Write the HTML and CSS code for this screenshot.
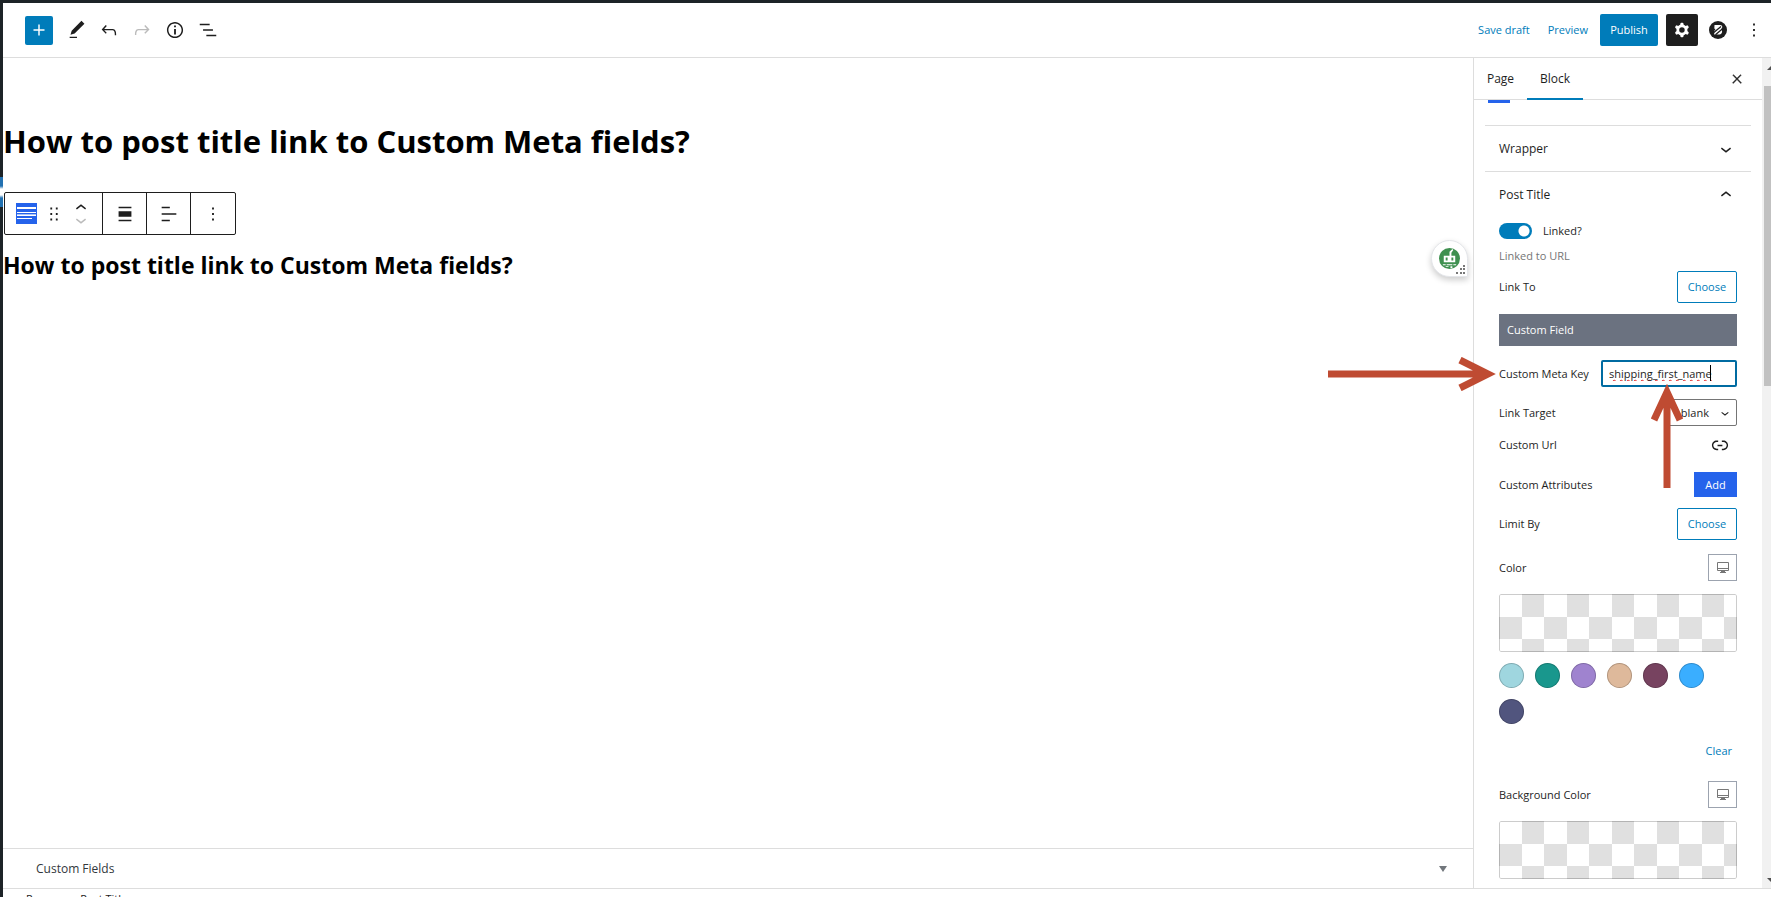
FILE: index.html
```html
<!DOCTYPE html>
<html lang="en">
<head>
<meta charset="utf-8">
<title>Edit Page</title>
<link rel="stylesheet" href="styles.css">
</head>
<body>
<svg class="sprite" aria-hidden="true">
  <symbol id="down" viewBox="0 0 24 24"><path d="M17.5 11.6L12 16l-5.5-4.4.9-1.2L12 14l4.5-3.6 1 1.2z"/></symbol>
  <symbol id="up" viewBox="0 0 24 24"><path d="M6.5 12.4L12 8l5.5 4.4-.9 1.2L12 10l-4.5 3.6-1-1.2z"/></symbol>
  <symbol id="more" viewBox="0 0 24 24"><path d="M13 19h-2v-2h2v2zm0-6h-2v-2h2v2zm0-6h-2V5h2v2z"/></symbol>
  <symbol id="monitor" viewBox="0 0 16 16"><path fill="none" stroke="#777" d="M2.5 2.5h11v8h-11zM2.500 8.500h11M6 11.500h4M5 12.500h6"/></symbol>
</svg>
<div class="app">
  <header class="topbar">
    <div class="tools">
      <button class="inserter" aria-label="Add block"><svg class="icon" viewBox="0 0 24 24"><path d="M18 11.200h-5.200V6h-1.600v5.200H6v1.600h5.200V18h1.600v-5.200H18z"/></svg></button>
      <button class="tool" aria-label="Tools"><svg class="icon" viewBox="0 0 24 24"><path d="M20.1 5.1L16.9 2 6.2 12.7l-1.3 4.4 4.5-1.3L20.1 5.1zM4 20.8h8v-1.5H4v1.5z"/></svg></button>
      <button class="tool" aria-label="Undo"><svg class="icon" viewBox="0 0 24 24"><path d="M18.3 11.7c-.6-.6-1.4-.9-2.3-.9H6.7l2.9-3.3-1.1-1-4.5 5L8.5 16l1-1-2.7-2.7H16c.5 0 .9.2 1.3.5 1 1 1 3.4 1 4.5v.3h1.5v-.2c0-1.5 0-4.3-1.5-5.7z"/></svg></button>
      <button class="tool muted" aria-label="Redo"><svg class="icon" viewBox="0 0 24 24"><path d="M15.6 6.5l-1.1 1 2.9 3.3H8c-.9 0-1.7.3-2.3.9-1.4 1.5-1.4 4.2-1.4 5.6v.2h1.5v-.3c0-1.1 0-3.5 1-4.5.3-.3.7-.5 1.300-.5h9.200L14.500 15l1.100 1.100 4.600-4.600-4.600-5z"/></svg></button>
      <button class="tool" aria-label="Details"><svg class="icon" viewBox="0 0 24 24"><path d="M12 3.2c-4.800 0-8.800 3.900-8.800 8.800 0 4.800 3.900 8.800 8.800 8.800 4.800 0 8.800-3.900 8.800-8.800 0-4.800-4-8.800-8.800-8.800zm0 16c-4 0-7.200-3.300-7.200-7.200C4.800 8 8 4.800 12 4.800s7.200 3.300 7.200 7.200c0 4-3.200 7.200-7.200 7.200zM11 17h2v-6h-2v6zm0-8h2V7h-2v2z"/></svg></button>
      <button class="tool" aria-label="List view"><svg class="icon" viewBox="0 0 24 24"><path d="M13.800 5.200H3v1.500h10.800V5.200zm-3.600 12v1.500H21v-1.500H10.200zm7.200-6H6.600v1.500h10.800v-1.500z"/></svg></button>
    </div>
    <div class="actions">
      <button class="text-button">Save draft</button>
      <button class="text-button preview">Preview</button>
      <button class="publish">Publish</button>
      <button class="settings" aria-label="Settings"><svg class="icon" viewBox="0 0 24 24"><path fill-rule="evenodd" d="M10.289 4.836A1 1 0 0111.275 4h1.306a1 1 0 01.987.836l.244 1.466c.787.26 1.503.679 2.108 1.218l1.393-.522a1 1 0 011.216.437l.653 1.130a1 1 0 01-.23 1.273l-1.148.944a6.025 6.025 0 010 2.435l1.149.946a1 1 0 01.23 1.272l-.653 1.130a1 1 0 01-1.216.437l-1.394-.522c-.605.54-1.320.958-2.108 1.218l-.244 1.466a1 1 0 01-.987.836h-1.306a1 1 0 01-.986-.836l-.244-1.466a5.995 5.995 0 01-2.108-1.218l-1.394.522a1 1 0 01-1.217-.436l-.653-1.131a1 1 0 01.23-1.272l1.149-.946a6.026 6.026 0 010-2.435l-1.148-.944a1 1 0 01-.23-1.272l.653-1.131a1 1 0 011.217-.437l1.393.522a5.994 5.994 0 012.108-1.218l.244-1.466zM14.929 12a3 3 0 11-6 0 3 3 0 016 0z"/></svg></button>
      <button class="plugin" aria-label="Plugin"><svg viewBox="0 0 18 18"><circle cx="9" cy="9" r="9"/><path fill="#fff" d="M5.500 4H11c2 0 2.800 1.500 2 3-.4.800-.8 1-.8 1.500 1.500 1 1.300 4.500-1.700 5H5.200V9.500h1V7.800h-.9z"/><path fill="none" stroke="#1e1e1e" stroke-width="1.300" d="M4.500 11.800 12 5.500M6.500 13.800 13.800 7.500"/></svg></button>
      <button class="options" aria-label="Options"><svg class="icon"><use href="#more"/></svg></button>
    </div>
  </header>

  <div class="workspace">
    <main class="editor">
      <div class="canvas">
        <h1 class="page-title">How to post title link to Custom Meta fields?</h1>
        <div class="block-toolbar">
          <div class="group first">
            <button class="block-type" aria-label="Post Title"><svg viewBox="0 0 21 21"><path fill="#2563eb" d="M0 0h21v21H0z"/><path fill="#fff" d="M1 4h19v2H1zM1 9h19v1H1zM1 12h19v1H1zM1 15h15v1H1z"/><path fill="#a8c1f7" d="M1 11h19v1H1z"/></svg></button>
            <button class="drag" aria-label="Drag"><svg class="icon" viewBox="0 0 24 24"><path d="M8 7h2V5H8v2zm0 6h2v-2H8v2zm0 6h2v-2H8v2zm6-14v2h2V5h-2zm0 8h2v-2h-2v2zm0 6h2v-2h-2v2z"/></svg></button>
            <div class="movers">
              <button aria-label="Move up"><svg class="icon"><use href="#up"/></svg></button>
              <button class="muted" aria-label="Move down"><svg class="icon"><use href="#down"/></svg></button>
            </div>
          </div>
          <button class="group" aria-label="Align"><svg class="icon" viewBox="0 0 24 24"><path d="M5 15h14V9H5v6zm0 4.800h14v-1.500H5v1.500zM5 4.200v1.500h14V4.200H5z"/></svg></button>
          <button class="group" aria-label="Align text"><svg class="icon" viewBox="0 0 24 24"><path d="M4 19.800h8.900v-1.500H4v1.500zm8.900-15.600H4v1.500h8.900V4.200zm-8.900 7v1.500h16v-1.500H4z"/></svg></button>
          <button class="group" aria-label="Options"><svg class="icon"><use href="#more"/></svg></button>
        </div>
        <h2 class="post-title">How to post title link to Custom Meta fields?</h2>
        <div class="assistant">
          <svg viewBox="0 0 22 22"><circle cx="11" cy="11" r="11" fill="#3f9050"/><path fill="#fff" d="M5 8h6V4l3-3 1 1-2 3v3h4v7H5zM4 17h3v1H4zM8 17h6v1H8zM15 17h3v1h-3zM7 19h3v1H7zM12 19h2v2h-2z"/><path fill="#3f9050" d="M7 10h2v3H7zM13 10h2v3h-2z"/></svg>
          <svg class="grip" viewBox="0 0 10 10"><path fill="#777" d="M7 0h2v2H7zM4 3h2v2H4zM7 3h2v2H7zM0 7h2v2H0zM4 7h2v2H4zM7 7h2v2H7z"/></svg>
        </div>
      </div>
      <button class="metabox"><span>Custom Fields</span><span class="triangle"></span></button>
    </main>

    <aside class="sidebar">
      <div class="tabs">
        <button class="tab page">Page</button>
        <button class="tab active">Block</button>
        <button class="close" aria-label="Close settings"><svg viewBox="0 0 24 24"><path d="M13 11.800l6.100-6.300-1-1-6.100 6.200-6.100-6.200-1 1 6.100 6.300-6.500 6.700 1 1 6.500-6.600 6.500 6.600 1-1z"/></svg></button>
      </div>
      <div class="panels">
        <div class="progress"></div>
        <button class="panel-head"><span>Wrapper</span><svg class="icon"><use href="#down"/></svg></button>
        <section class="panel">
          <button class="panel-head"><span>Post Title</span><svg class="icon"><use href="#up"/></svg></button>
          <div class="fields">
            <label class="toggle"><input type="checkbox" role="switch" checked><span>Linked?</span></label>
            <p class="help">Linked to URL</p>
            <div class="row tall"><span>Link To</span><button class="choose">Choose</button></div>
            <div class="chosen">Custom Field</div>
            <div class="row key-row">
              <label for="meta-key">Custom Meta Key</label>
              <div class="key-box"><input id="meta-key" type="text" value="shipping_first_name" spellcheck="false"><span class="caret"></span></div>
              <svg class="arrow across" viewBox="0 0 168 34"><path d="M0 17h160M132 3l28 14-28 14"/></svg>
              <svg class="arrow upward" viewBox="0 0 36 104"><path d="M18 104V8M5 36 18 8l13 28"/></svg>
            </div>
            <div class="row target-row"><label for="target">Link Target</label><div class="select-box"><select id="target"><option>_blank</option></select><svg><use href="#down"/></svg></div></div>
            <div class="row url-row"><span>Custom Url</span><button class="link" aria-label="Set link"><svg class="icon" viewBox="0 0 24 24"><path d="M15.600 7.200H14v1.500h1.600c2 0 3.700 1.700 3.700 3.700s-1.700 3.700-3.700 3.700H14v1.500h1.600c2.800 0 5.200-2.300 5.200-5.200 0-2.900-2.300-5.200-5.200-5.200zM4.700 12.400c0-2 1.700-3.700 3.700-3.700H10V7.200H8.400c-2.900 0-5.200 2.300-5.200 5.200 0 2.900 2.300 5.200 5.200 5.200H10v-1.500H8.400c-2 0-3.700-1.700-3.700-3.700zm4.600.9h5.300v-1.500H9.300v1.500z"/></svg></button></div>
            <div class="row attr-row"><span>Custom Attributes</span><button class="add">Add</button></div>
            <div class="row tall"><span>Limit By</span><button class="choose">Choose</button></div>
            <div class="row color-row"><span>Color</span><button class="device" aria-label="Desktop"><svg><use href="#monitor"/></svg></button></div>
            <button class="checker" aria-label="Custom color"></button>
            <div class="swatches">
              <button class="swatch aqua" aria-label="Aqua"></button>
              <button class="swatch teal" aria-label="Teal"></button>
              <button class="swatch violet" aria-label="Violet"></button>
              <button class="swatch sand" aria-label="Sand"></button>
              <button class="swatch plum" aria-label="Plum"></button>
              <button class="swatch sky" aria-label="Sky"></button>
              <button class="swatch indigo" aria-label="Indigo"></button>
            </div>
            <button class="clear">Clear</button>
            <div class="row color-row"><span>Background Color</span><button class="device" aria-label="Desktop"><svg><use href="#monitor"/></svg></button></div>
            <button class="checker" aria-label="Custom background color"></button>
          </div>
        </section>
      </div>
      <div class="scrollbar"><span class="scroll-up"></span><span class="thumb"></span><span class="scroll-down"></span></div>
    </aside>
  </div>
  <footer class="crumbs"><span>Page</span><span class="sep">›</span><span>Post Title</span></footer>
  <div class="menu-edge"></div>
</div>
</body>
</html>
```
FILE: styles.css
```css
* { box-sizing: border-box; }
body {
  margin: 0;
  height: 100vh;
  overflow: hidden;
  font: 11px/16px "Open Sans", "Noto Sans", sans-serif;
  color: #1e1e1e;
  background: #fff;
}
button, input, select { font: inherit; color: inherit; }
button { padding: 0; border: 0; background: none; }
h1, h2, p { margin: 0; }
svg { display: block; fill: currentColor; }
.sprite { position: absolute; width: 0; height: 0; }
.icon { width: 22px; height: 22px; flex: none; }
.muted { color: #bbb; }

.app {
  position: relative;
  display: flex;
  flex-direction: column;
  height: calc(100vh + 14px);
  border-top: 3px solid #1d2327;
  border-left: 3px solid #1d2327;
}
.menu-edge {
  position: absolute;
  left: -3px;
  top: 174px;
  width: 3px;
  height: 30px;
  background: linear-gradient(#2271b1 9px, #fff 12px, #fff 18px, #2271b1 21px);
}

.topbar {
  display: flex;
  justify-content: space-between;
  align-items: center;
  height: 55px;
  flex: none;
  border-bottom: 1px solid #ddd;
}
.tools { display: flex; align-items: center; padding-left: 22px; }
.inserter {
  display: grid;
  place-items: center;
  width: 28px;
  height: 29px;
  margin-right: 8px;
  border-radius: 2px;
  color: #fff;
  background: #007cba;
}
.tool { display: grid; place-items: center; width: 32px; height: 32px; }
.tool:nth-child(n+4) { width: 33px; }
.actions { display: flex; align-items: center; padding-right: 6px; color: #007cba; }
.text-button { margin-right: 18px; }
.preview { margin-right: 12px; }
.publish { width: 58px; height: 32px; border-radius: 2px; color: #fff; background: #007cba; }
.settings {
  display: grid;
  place-items: center;
  width: 32px;
  height: 32px;
  margin: 0 11px 0 8px;
  border-radius: 2px;
  color: #fff;
  background: #1e1e1e;
}
.plugin { width: 18px; color: #1e1e1e; margin-right: 16px; }
.options { color: #1e1e1e; }

.workspace { display: flex; flex: 1; min-height: 0; }
.editor { display: flex; flex-direction: column; flex: 1; min-width: 0; }
.canvas { position: relative; flex: 1; padding-top: 60px; color: #000; }
.page-title { font-size: 31px; line-height: 46px; font-weight: 700; }
.block-toolbar {
  display: inline-flex;
  height: 43px;
  margin: 28px 0 13px 1px;
  border: 1px solid #1e1e1e;
  border-radius: 2px;
  color: #1e1e1e;
}
.group { display: grid; place-items: center; width: 44px; border-right: 1px solid #1e1e1e; }
.group:last-child { border-right: 0; }
.first { display: flex; width: 98px; padding-left: 11px; }
.block-type { width: 21px; }
.drag { margin: 0 10px 0 6px; }
.movers { display: flex; flex-direction: column; margin-left: -5px; }
.movers button { height: 12px; }
.movers .icon { margin: -5px 0; }
.post-title { font-size: 23px; line-height: 34px; font-weight: 700; }
.assistant {
  position: absolute;
  right: 5px;
  top: 182px;
  width: 37px;
  height: 37px;
  padding: 7px;
  border: 1px solid #e4e6ea;
  border-radius: 19px 19px 0 19px;
  background: #fff;
  box-shadow: 0 3px 6px #0003;
}
.assistant svg { width: 21px; }
.assistant .grip { position: absolute; right: 1px; bottom: 1px; width: 10px; }
.metabox {
  display: flex;
  justify-content: space-between;
  align-items: center;
  height: 40px;
  padding: 1px 26px 0 33px;
  border-top: 1px solid #ddd;
  font-size: 12px;
  color: #32373c;
}
.triangle { border: 4px solid transparent; border-top: 6px solid #72777c; border-bottom: 0; }

.sidebar {
  display: grid;
  grid-template: 42px 1fr / 1fr 9px;
  width: 298px;
  border-left: 1px solid #ddd;
}
.tabs { display: flex; border-bottom: 1px solid #ddd; }
.tab { font-size: 12px; }
.page { width: 53px; }
.active { width: 56px; height: 42px; border-bottom: 2px solid #007cba; border-top: 2px solid transparent; }
.close { margin: 0 18px 0 auto; }
.close svg { width: 14px; stroke: currentColor; }
.panels { padding: 0 11px; min-height: 0; grid-row: 2; }
.progress { width: 22px; height: 3px; margin: 0 0 22px 3px; background: #2563eb; }
.panel-head {
  display: flex;
  justify-content: space-between;
  align-items: center;
  width: 100%;
  height: 46px;
  padding: 0 14px;
  border-top: 1px solid #ddd;
  font-size: 12px;
}
.fields { padding: 6px 14px 0; }
.toggle { display: flex; align-items: center; gap: 11px; height: 16px; }
.toggle input {
  appearance: none;
  width: 33px;
  height: 16px;
  margin: 0;
  border-radius: 8px;
  background: radial-gradient(circle at 25px 8px, #fff 5px, #007cba 6px);
}
.help { margin: 9px 0 7px; color: #757575; }
.row { display: flex; align-items: center; justify-content: space-between; }
.tall { height: 32px; }
.choose { width: 60px; height: 32px; border: 1px solid #007cba; border-radius: 2px; color: #007cba; }
.chosen { margin: 11px 0 14px; padding: 8px; color: #fff; background: #6b7280; }
.key-row { position: relative; height: 27px; }
.key-box { position: relative; width: 136px; }
.key-box input {
  display: block;
  width: 100%;
  height: 27px;
  padding: 0 6px;
  border: 2px solid #006ba1;
  border-radius: 2px;
  outline: 0;
  background: #fff;
  text-decoration: underline wavy #e02020 1px;
  text-decoration-skip-ink: none;
}
.caret { position: absolute; left: 109px; top: 5px; width: 1px; height: 16px; background: #000; }
.arrow { position: absolute; z-index: 1; fill: none; stroke: #bf4b32; stroke-width: 7; pointer-events: none; }
.across { right: 241px; top: -3px; width: 168px; }
.upward { right: 52px; top: 24px; width: 36px; }
.target-row { height: 27px; margin: 12px 0 8px; }
.select-box { position: relative; }
.select-box select {
  appearance: none;
  width: 69px;
  height: 27px;
  padding: 0 7px;
  border: 1px solid #757575;
  border-radius: 2px;
  background: #fff;
}
.select-box svg { position: absolute; right: 4px; top: 6px; width: 16px; height: 16px; }
.url-row { height: 22px; padding-right: 6px; }
.attr-row { height: 25px; margin: 16px 0 11px; }
.add { width: 43px; height: 25px; color: #fff; background: #2563eb; }
.color-row { height: 27px; margin: 14px 0 13px; }
.device { display: grid; place-items: center; width: 29px; height: 27px; border: 1px solid #9ca3af; }
.device svg { width: 16px; height: 16px; }
.checker {
  display: block;
  width: 100%;
  height: 58px;
  border-radius: 2px;
  box-shadow: inset 0 0 0 1px #0003;
  background-image:
    repeating-linear-gradient(45deg, #e0e0e0 25%, transparent 0, transparent 75%, #e0e0e0 0, #e0e0e0),
    repeating-linear-gradient(45deg, #e0e0e0 25%, transparent 0, transparent 75%, #e0e0e0 0, #e0e0e0);
  background-size: 45px 45px;
  background-position: 0 0, 23px 23px;
}
.swatches { display: flex; flex-wrap: wrap; gap: 11px; margin: 11px 0 19px; }
.swatch { width: 25px; height: 25px; border-radius: 50%; box-shadow: inset 0 0 0 1px #0003; }
.aqua { background: #9fd6df; }
.teal { background: #19978d; }
.violet { background: #9f83cf; }
.sand { background: #deb99b; }
.plum { background: #774360; }
.sky { background: #3aaeff; }
.indigo { background: #51557e; }
.clear { display: block; margin: 0 5px 22px auto; color: #007cba; }

.scrollbar {
  display: flex;
  flex-direction: column;
  grid-area: 1 / 2 / 3 / 3;
  padding: 8px 0 6px 2px;
  overflow: hidden;
  background: #f1f1f1;
}
.scroll-up, .scroll-down { margin-left: 3px; border: 4px solid transparent; }
.scroll-up { border-bottom-color: #505050; border-top: 0; }
.scroll-down { margin-top: auto; border-top-color: #505050; border-bottom: 0; }
.thumb { height: 300px; margin-top: 16px; background: #c1c1c1; }

.crumbs {
  display: flex;
  height: 23px;
  padding-left: 23px;
  border-top: 1px solid #ddd;
  line-height: 20px;
}
.sep { margin: 0 14px 0 12px; }
```
